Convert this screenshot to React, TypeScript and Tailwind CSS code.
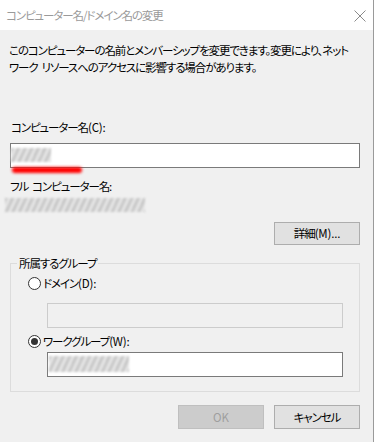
import React from "react";

const Blur = ({ w, h, className = "" }: { w: number; h: number; className?: string }) => (
  <div
    className={`blur-[1px] bg-[repeating-linear-gradient(115deg,#bdbdbd_0px,#cfcfcf_2px,#ececec_4px,#d6d6d6_6px)] ${className}`}
    style={{ width: w, height: h }}
  />
);

const Radio = ({ checked }: { checked?: boolean }) => (
  <span className="w-[13px] h-[13px] rounded-full border border-[#333333] bg-white flex items-center justify-center shrink-0">
    {checked && <span className="w-[7px] h-[7px] rounded-full bg-[#333333]" />}
  </span>
);

const Sp = () => <span className="inline-block w-[4px]" />;
const L = ({ children }: { children: React.ReactNode }) => (
  <span className="tracking-[-0.2px]">{children}</span>
);

export default function App() {
  return (
    <div className="w-[374px] h-[442px] bg-[#f0f0f0] border-r border-[#9a9a9a] text-[11.5px] tracking-[-1.1px] leading-[17px] text-black font-['Noto_Sans_CJK_JP','Noto_Sans',sans-serif] [font-feature-settings:'palt'] overflow-hidden whitespace-nowrap">
      <div className="h-[30px] bg-white flex items-center justify-between pl-[6px] pr-[7px]">
        <span className="text-[#9a9a9a]">コンピューター名/ドメイン名の変更</span>
        <svg width="12" height="12" viewBox="0 0 12 12" className="mt-[1px]">
          <path d="M0.5 0.5 L11.5 11.5 M11.5 0.5 L0.5 11.5" stroke="#8a8a8a" strokeWidth="1" />
        </svg>
      </div>
      <div className="pl-[10px] pr-[13px]">
        <p className="pt-[12px] -ml-[1px]">
          このコンピューターの名前とメンバーシップを変更できます。変更により、ネット
          <br />
          ワーク<Sp />リソースへのアクセスに影響する場合があります。
        </p>
        <div className="mt-[43px] ml-[1px]">コンピューター名<L>(C):</L></div>
        <div className="relative mt-[7px] h-[25px] border border-[#7a7a7a] bg-white">
          <Blur w={40} h={14} className="mt-[4px]" />
          <div className="absolute left-[1px] top-[23px] w-[70px] h-[6px] rounded-full bg-[#ff0000] blur-[1.5px]" />
        </div>
        <div className="mt-[10px]">フル<Sp />コンピューター名:</div>
        <Blur w={140} h={14} className="mt-[3px] -ml-[5px]" />
        <div className="flex justify-end mt-[10px]">
          <button className="w-[86px] h-[23px] bg-[#e1e1e1] border border-[#adadad] flex items-center justify-center">
            詳細<L>(M)...</L>
          </button>
        </div>
        <fieldset className="mt-[10px] border border-[#dcdcdc] pl-[17px] pr-[16px] pb-[14px]">
          <legend className="-ml-[11px] px-[2px] leading-[16px]">所属するグループ</legend>
          <div className="mt-[4px] flex items-center gap-[2px]">
            <Radio />
            <span>ドメイン<L>(D):</L></span>
          </div>
          <div className="mt-[11px] ml-[19px] h-[25px] border border-[#cccccc] bg-[#f0f0f0]" />
          <div className="mt-[5px] flex items-center gap-[2px]">
            <Radio checked />
            <span>ワークグループ<L>(W):</L></span>
          </div>
          <div className="mt-[2px] ml-[19px] h-[25px] border border-[#7a7a7a] bg-white">
            <Blur w={80} h={16} className="mt-[3px] ml-[1px]" />
          </div>
        </fieldset>
        <div className="mt-[13px] flex justify-end gap-[10px]">
          <button className="w-[86px] h-[24px] bg-[#cccccc] border border-[#bfbfbf] text-[#9f9f9f] tracking-normal flex items-center justify-center">
            OK
          </button>
          <button className="w-[86px] h-[24px] bg-[#e1e1e1] border border-[#adadad] flex items-center justify-center">
            キャンセル
          </button>
        </div>
      </div>
    </div>
  );
}
